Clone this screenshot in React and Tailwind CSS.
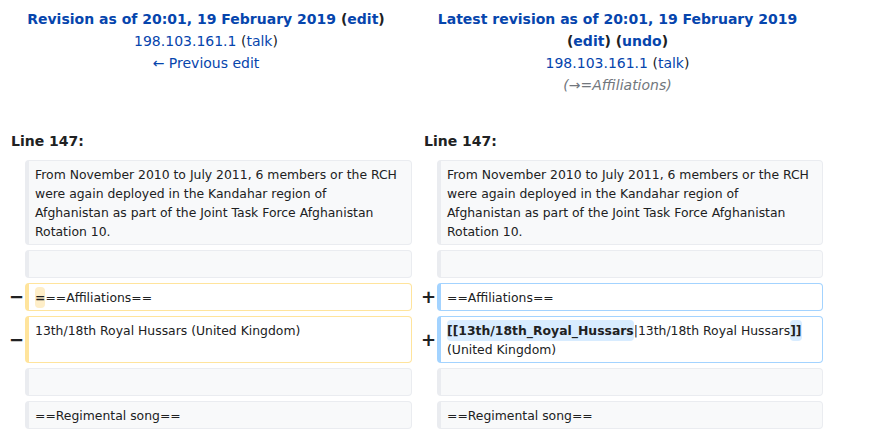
import React from "react";

const link = "text-[#0645ad]";

const Marker = ({ sign }) => (
  <div className="flex items-center justify-end pr-[1px] text-[18px] font-bold leading-none text-[#202122]">
    {sign}
  </div>
);

const Cell = ({ kind = "context", children }) => {
  const styles = {
    context: "bg-[#f8f9fa] border-[#eaecf0]",
    del: "bg-white border-[#ffe49c]",
    add: "bg-white border-[#a3d3ff]",
  };
  return (
    <div
      className={`rounded-[4px] border border-l-4 pl-[6px] pr-[11px] pt-[4px] pb-[3px] text-[12.4px] leading-[19px] text-[#202122] whitespace-pre-wrap break-words ${styles[kind]}`}
    >
      {children}
    </div>
  );
};

const Empty = () => <div />;

const intro =
  "From November 2010 to July 2011, 6 members or the RCH were again deployed in the Kandahar region of Afghanistan as part of the Joint Task Force Afghanistan Rotation 10.";

export default function App() {
  return (
    <div className="min-h-screen bg-white" style={{ fontFamily: '"DejaVu Sans", sans-serif' }}>
      <div className="w-[823px]">
        <div className="grid grid-cols-[412px_411px] pt-[8px] text-[14px] leading-[22px] text-[#202122]">
          <div className="px-[5px] text-center">
            <div className="font-bold">
              <span className={link}>Revision as of 20:01, 19 February 2019</span>{" "}
              (<span className={link}>edit</span>)
            </div>
            <div>
              <span className={link}>198.103.161.1</span> (<span className={link}>talk</span>)
            </div>
            <div className={link}>← Previous edit</div>
          </div>
          <div className="px-[5px] text-center">
            <div className="font-bold">
              <span className={link}>Latest revision as of 20:01, 19 February 2019</span>{" "}
              (<span className={link}>edit</span>) (<span className={link}>undo</span>)
            </div>
            <div>
              <span className={link}>198.103.161.1</span> (<span className={link}>talk</span>)
            </div>
            <div className="italic text-[#72777d]">(→=Affiliations)</div>
          </div>
        </div>

        <div className="mt-[34px] grid grid-cols-[412px_411px] text-[14px] font-bold leading-[22px] text-[#202122]">
          <div className="pl-[11px]">Line 147:</div>
          <div className="pl-[12px]">Line 147:</div>
        </div>

        <div className="mt-[8px] grid grid-cols-[25px_387px_25px_386px] gap-y-[5px]">
          <Empty />
          <Cell>{intro}</Cell>
          <Empty />
          <Cell>{intro}</Cell>

          <Empty />
          <Cell> </Cell>
          <Empty />
          <Cell> </Cell>

          <Marker sign="−" />
          <Cell kind="del">
            <del className="rounded-[4px] bg-[#feeec8] py-[3px] font-bold no-underline">=</del>
            ==Affiliations==
          </Cell>
          <Marker sign="+" />
          <Cell kind="add">==Affiliations==</Cell>

          <Marker sign="−" />
          <Cell kind="del">13th/18th Royal Hussars (United Kingdom)</Cell>
          <Marker sign="+" />
          <Cell kind="add">
            <ins className="rounded-[4px] bg-[#d8ecff] py-[3px] font-bold no-underline">
              [[13th/18th_Royal_Hussars
            </ins>
            |13th/18th Royal Hussars
            <ins className="rounded-[4px] bg-[#d8ecff] py-[3px] font-bold no-underline">]]</ins>{" "}
            (United Kingdom)
          </Cell>

          <Empty />
          <Cell> </Cell>
          <Empty />
          <Cell> </Cell>

          <Empty />
          <Cell>==Regimental song==</Cell>
          <Empty />
          <Cell>==Regimental song==</Cell>
        </div>
      </div>
    </div>
  );
}
